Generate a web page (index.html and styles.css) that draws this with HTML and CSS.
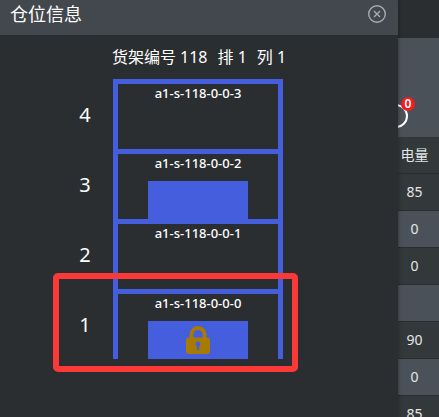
FILE: index.html
```
<!DOCTYPE html>
<html lang="zh-CN">
<head>
    <meta charset="UTF-8">
    <meta name="viewport" content="width=device-width, initial-scale=1.0">
    <title>仓位信息</title>
    <link rel="stylesheet" href="styles.css">
</head>
<body>
    <div class="page">
        <section class="panel">
            <header class="panel-header">
                <h1 class="panel-title">仓位信息</h1>
                <button class="close-button" type="button" aria-label="关闭">
                    <svg width="20" height="20" viewBox="0 0 20 20" fill="none" stroke="#a9abad">
                        <circle cx="10" cy="10" r="8.3" stroke-width="1.4"/>
                        <path d="M7 7l6 6M13 7l-6 6" stroke-width="1.4"/>
                    </svg>
                </button>
            </header>
            <h2 class="rack-title">
                <span>货架编号 118</span>
                <span>排 1</span>
                <span>列 1</span>
            </h2>
            <div class="rack">
                <div class="level">
                    <div class="level-number">4</div>
                    <div class="slot"><span class="slot-code">a1-s-118-0-0-3</span></div>
                </div>
                <div class="level">
                    <div class="level-number">3</div>
                    <div class="slot">
                        <span class="slot-code">a1-s-118-0-0-2</span>
                        <div class="box"></div>
                    </div>
                </div>
                <div class="level">
                    <div class="level-number">2</div>
                    <div class="slot"><span class="slot-code">a1-s-118-0-0-1</span></div>
                </div>
                <div class="level selected">
                    <div class="level-number">1</div>
                    <div class="slot">
                        <span class="slot-code">a1-s-118-0-0-0</span>
                        <div class="box">
                            <svg width="24" height="28" viewBox="0 0 24 28">
                                <path d="M5.5 13V8.5a6.5 6.5 0 0 1 13 0V13" fill="none" stroke="#a87b00" stroke-width="3.8"/>
                                <path fill="#a87b00" fill-rule="evenodd" d="M3 11.500h18a3 3 0 0 1 3 3V25a3 3 0 0 1-3 3H3a3 3 0 0 1-3-3V14.500a3 3 0 0 1 3-3zM12 15.500a2.500 2.500 0 0 0-1.200 4.700V23a1.200 1.200 0 0 0 2.400 0v-2.800A2.500 2.500 0 0 0 12 15.500z"/>
                            </svg>
                        </div>
                    </div>
                </div>
            </div>
        </section>

        <main class="background">
            <div class="topbar"></div>
            <div class="toolbar">
                <div class="task-icon"><span class="badge">0</span></div>
            </div>
            <table class="power-table">
                <thead>
                    <tr><th>电量</th></tr>
                </thead>
                <tbody>
                    <tr><td>85</td></tr>
                    <tr><td>0</td></tr>
                    <tr><td>0</td></tr>
                    <tr><td></td></tr>
                    <tr><td>90</td></tr>
                    <tr><td>0</td></tr>
                    <tr><td>85</td></tr>
                </tbody>
            </table>
        </main>
    </div>
</body>
</html>
```
FILE: styles.css
```
*,
*::after {
    box-sizing: border-box;
}

body {
    margin: 0;
    font-family: "Noto Sans", "Noto Sans CJK SC", sans-serif;
    color: #ffffff;
    background-color: #2b2e31;
}

.page {
    display: grid;
    grid-template-columns: 1fr 41px;
    height: 100vh;
    overflow: hidden;
}

.panel {
    position: relative;
    z-index: 1;
    background-color: #2b2e31;
    box-shadow: 0 0 4px rgba(0, 0, 0, 0.4);
}

.panel-header {
    display: flex;
    justify-content: space-between;
    align-items: center;
    height: 35px;
    padding: 0 11px 7px 10px;
    background-color: #42484d;
}

.panel-title {
    margin: 0;
    font-size: 18px;
    font-weight: 400;
    line-height: 28px;
}

.close-button {
    display: flex;
    padding: 0;
    border: none;
    background: none;
    cursor: pointer;
}

.rack-title {
    display: flex;
    justify-content: center;
    gap: 10px;
    margin: 0;
    padding: 10px 0;
    font-size: 16px;
    font-weight: 400;
    line-height: 24px;
}

.level {
    position: relative;
    display: grid;
    grid-template-columns: 56px 170px 58px;
    justify-content: center;
    height: 70px;
}

.level-number {
    align-self: center;
    padding-top: 2px;
    font-size: 20px;
    line-height: 28px;
    text-align: center;
}

.slot {
    display: flex;
    flex-direction: column;
    justify-content: space-between;
    align-items: center;
    border: 5px solid #455edd;
    border-bottom: none;
}

.slot-code {
    font-size: 13px;
    font-weight: 500;
    line-height: 18px;
}

.box {
    display: flex;
    justify-content: center;
    align-items: center;
    width: 100px;
    height: 38px;
    background-color: #455edd;
}

/* red frame around the selected level */
.level.selected::after {
    content: "";
    position: absolute;
    top: -16px;
    bottom: -13px;
    left: calc(50% - 146px);
    width: 245px;
    border: 6px solid #fb3a38;
    border-radius: 5px;
}

.background {
    overflow: hidden;
}

.topbar {
    height: 38px;
}

.toolbar {
    height: 99px;
    padding-top: 66px;
    background-color: #4b5158;
}

.task-icon {
    position: relative;
    width: 24px;
    height: 24px;
    margin-left: -14px;
    border: 2px solid #ffffff;
    border-radius: 50%;
}

.badge {
    position: absolute;
    top: -9px;
    right: -9px;
    width: 14px;
    height: 14px;
    border-radius: 50%;
    background-color: #f01c20;
    font-size: 12px;
    font-weight: 600;
    line-height: 14px;
    text-align: center;
}

.power-table {
    width: 100%;
    border-spacing: 0;
    background-color: #33383a;
    color: #e4e5e6;
}

.power-table th,
.power-table td {
    height: 37px;
    padding: 0 8px 0 0;
    border-bottom: 1px solid #292d2f;
    font-size: 14px;
    font-weight: 400;
    line-height: 20px;
    text-align: center;
    white-space: nowrap;
}

.power-table tbody tr:nth-child(even) {
    background-color: #4b5158;
}
```
